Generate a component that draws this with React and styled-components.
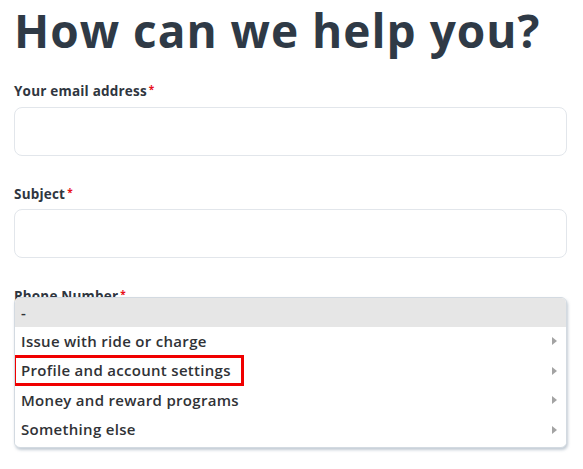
import React from "react";
import styled, { createGlobalStyle } from "styled-components";

const GlobalStyle = createGlobalStyle`
  body {
    margin: 0;
    background: #fff;
    font-family: "Open Sans", "Liberation Sans", sans-serif;
  }
`;

const Page = styled.div`
  padding: 0 16px 0 14px;
  height: 469px;
  box-sizing: border-box;
  overflow: hidden;
`;

const Heading = styled.h1`
  margin: 0 0 22px;
  font-family: "Open Sans", sans-serif;
  font-weight: 700;
  font-size: 46px;
  line-height: 60px;
  letter-spacing: 1px;
  color: #2f3a46;
`;

const Field = styled.div`
  position: relative;
  margin-bottom: 29px;
`;

const Label = styled.label`
  display: block;
  font-size: 13.5px;
  line-height: 18px;
  font-weight: 700;
  letter-spacing: 0.2px;
  color: #2f3640;
  margin-bottom: ${(p) => (p.$gap ? p.$gap : 7)}px;
`;

const Star = styled.span`
  position: relative;
  top: -3px;
  line-height: 0;
  color: #e8101a;
  font-size: 10px;
  margin-left: 2px;
`;

const Input = styled.div`
  height: 49px;
  box-sizing: border-box;
  border: 1px solid #e2e6eb;
  border-radius: 8px;
  background: #fff;
`;

const Menu = styled.ul`
  position: absolute;
  top: 10px;
  left: 0;
  right: 0;
  margin: 0;
  padding: 0 0 2px;
  list-style: none;
  background: #fff;
  border: 1px solid #d3dae1;
  border-radius: 6px;
  box-shadow: 1px 2px 3px rgba(120, 140, 160, 0.45);
  overflow: hidden;
`;

const Option = styled.li`
  display: flex;
  align-items: center;
  justify-content: space-between;
  height: ${(p) => (p.$placeholder ? 28.5 : 29.5)}px;
  padding: 0 9px 0 0;
  background: ${(p) => (p.$placeholder ? "#e6e6e6" : "#fff")};
  font-family: "Open Sans", sans-serif;
  font-size: 15px;
  font-weight: 600;
  letter-spacing: 0.3px;
  color: #303236;
`;

const OptionText = styled.span`
  display: inline-block;
  margin-left: -2px;
  padding: 0 10px 0 5px;
  line-height: 25px;
  border: 3px solid ${(p) => (p.$marked ? "#f00000" : "transparent")};
`;

const Caret = styled.span`
  width: 0;
  height: 0;
  border-top: 4px solid transparent;
  border-bottom: 4px solid transparent;
  border-left: 5px solid #a3a3a3;
`;

const options = [
  "Issue with ride or charge",
  "Profile and account settings",
  "Money and reward programs",
  "Something else",
];

export default function App() {
  return (
    <Page>
      <GlobalStyle />
      <Heading>How can we help you?</Heading>
      <Field>
        <Label>
          Your email address<Star>*</Star>
        </Label>
        <Input />
      </Field>
      <Field>
        <Label $gap={6}>
          Subject<Star>*</Star>
        </Label>
        <Input />
      </Field>
      <Field>
        <Label>
          Phone Number<Star>*</Star>
        </Label>
        <Input />
        <Menu>
          <Option $placeholder>
            <OptionText>-</OptionText>
          </Option>
          {options.map((o, i) => (
            <Option key={o}>
              <OptionText $marked={i === 1}>{o}</OptionText>
              <Caret />
            </Option>
          ))}
        </Menu>
      </Field>
    </Page>
  );
}
